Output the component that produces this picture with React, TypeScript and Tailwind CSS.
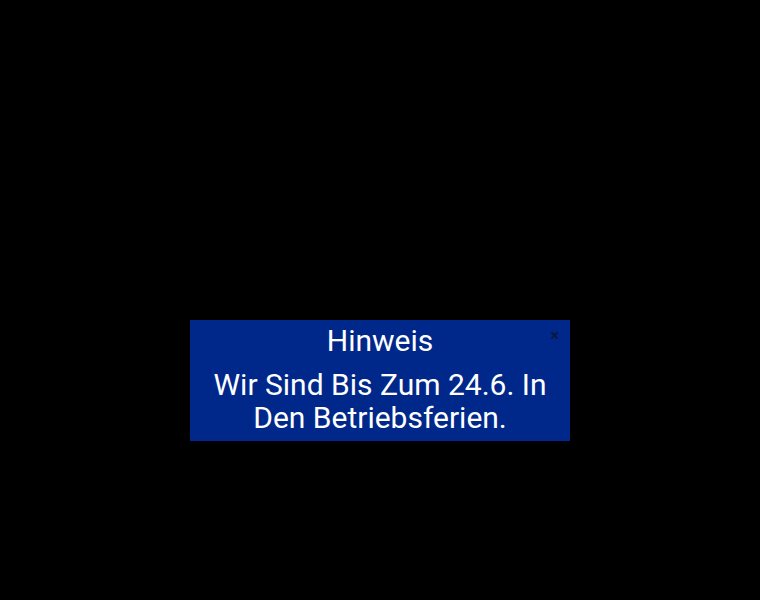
import React from 'react';

export default function App() {
  return (
    <div className="w-[760px] h-[600px] bg-black flex justify-center pt-[320px]" style={{ fontFamily: 'Roboto, "Noto Sans", sans-serif' }}>
      <div className="relative w-[380px] h-[121px] bg-[#00288a] text-white text-center text-[30px] leading-[33px] pt-[4px]">
        <span className="absolute top-[8px] right-[11px] text-[16px] leading-[16px] text-[#0d1640] font-bold">×</span>
        <div>Hinweis</div>
        <div className="mt-[11px] px-3">Wir Sind Bis Zum 24.6. In Den Betriebsferien.</div>
      </div>
    </div>
  );
}
